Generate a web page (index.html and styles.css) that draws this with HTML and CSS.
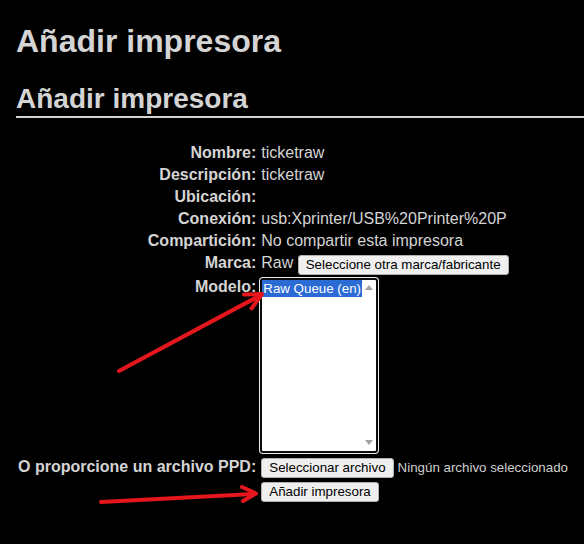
FILE: index.html
```html
<!DOCTYPE html>
<html lang="es">
<head>
<meta charset="utf-8">
<title>Añadir impresora</title>
<link rel="stylesheet" href="styles.css">
</head>
<body>
<div class="page">
  <h1 class="title">Añadir impresora</h1>
  <h2 class="subtitle">Añadir impresora</h2>
  <table class="form">
    <tr><th>Nombre:</th><td>ticketraw</td></tr>
    <tr><th>Descripción:</th><td>ticketraw</td></tr>
    <tr><th>Ubicación:</th><td></td></tr>
    <tr><th>Conexión:</th><td>usb:Xprinter/USB%20Printer%20P</td></tr>
    <tr><th>Compartición:</th><td>No compartir esta impresora</td></tr>
    <tr><th>Marca:</th><td>Raw <button class="btn drop" type="button">Seleccione otra marca/fabricante</button></td></tr>
    <tr class="top"><th>Modelo:</th><td>
      <div class="listbox">
        <div class="options"><div class="option selected">Raw Queue (en)</div></div>
        <div class="scrollbar"><span class="arrow up"></span><span class="arrow down"></span></div>
      </div>
    </td></tr>
    <tr><th>O proporcione un archivo PPD:</th><td><button class="btn" type="button">Seleccionar archivo</button><span class="filename">Ningún archivo seleccionado</span></td></tr>
    <tr><th></th><td><button class="btn" type="button">Añadir impresora</button></td></tr>
  </table>
</div>
<svg class="annotations" width="584" height="544" viewBox="0 0 584 544">
  <g fill="none" stroke="#e5161c" stroke-width="4" stroke-linecap="round" stroke-linejoin="round">
    <path d="M119 371 L259 296"/>
    <path d="M244 294.5 L262 294 L251.5 308.5"/>
    <path d="M101 502 L253 494"/>
    <path d="M242 487 L256 493.5 L243 501"/>
  </g>
</svg>
</body>
</html>
```

FILE: styles.css
```css
html, body {
  margin: 0;
  padding: 0;
  background: #000;
}
body {
  color: #d4d4d4;
  font-family: "Liberation Sans", Arial, sans-serif;
  width: 584px;
  height: 544px;
  overflow: hidden;
  position: relative;
}
.page {
  padding: 0 0 0 16px;
}
.title {
  margin: 0;
  padding-top: 23px;
  font-size: 32px;
  line-height: 36px;
  font-weight: bold;
  color: #d4d4d4;
}
.subtitle {
  margin: 24px 0 0 0;
  font-size: 28px;
  line-height: 32px;
  font-weight: bold;
  color: #d4d4d4;
  padding-bottom: 1px;
  border-bottom: 2px solid #d4d4d4;
}
.form {
  margin-top: 24px;
  border-collapse: collapse;
  border-spacing: 0;
  font-size: 16px;
  line-height: 18px;
}
.form th {
  text-align: right;
  font-weight: bold;
  padding: 2px 3px 2px 2px;
  white-space: nowrap;
  vertical-align: baseline;
}
.form td {
  text-align: left;
  padding: 2px 2px 2px 2px;
  white-space: nowrap;
  vertical-align: baseline;
}
.form tr.top th,
.form tr.top td {
  vertical-align: top;
}
.form tr.top th {
  padding-top: 1px;
}
.btn {
  font-family: "Liberation Sans", Arial, sans-serif;
  font-size: 13.333px;
  line-height: 16px;
  color: #000;
  background: #efefef;
  border: 1px solid #b0b0b0;
  border-radius: 3px;
  padding: 1px 7px;
  margin: 0;
}
.btn.drop {
  vertical-align: -1px;
}
.filename {
  font-size: 13.333px;
  margin-left: 4px;
  color: #cfcfcf;
}
.listbox {
  display: flex;
  box-sizing: border-box;
  width: 118px;
  height: 175px;
  margin: -1px 0 1px -1px;
  background: #fff;
  border: 2px solid #0c0c0c;
  border-radius: 3px;
  box-shadow: 0 0 0 1px #ececec;
}
.options {
  flex: 1;
}
.option {
  font-size: 13.333px;
  line-height: 17px;
  height: 17px;
  padding-left: 1px;
  color: #000;
}
.option.selected {
  background: #2a6bd4;
  color: #fff;
}
.scrollbar {
  width: 14px;
  display: flex;
  flex-direction: column;
  justify-content: space-between;
  align-items: center;
  padding: 5px 0 6px;
}
.arrow {
  width: 0;
  height: 0;
  border-left: 4px solid transparent;
  border-right: 4px solid transparent;
}
.arrow.up {
  border-bottom: 5px solid #a3a3a3;
}
.arrow.down {
  border-top: 5px solid #a3a3a3;
}
.annotations {
  position: absolute;
  left: 0;
  top: 0;
  pointer-events: none;
}
```
